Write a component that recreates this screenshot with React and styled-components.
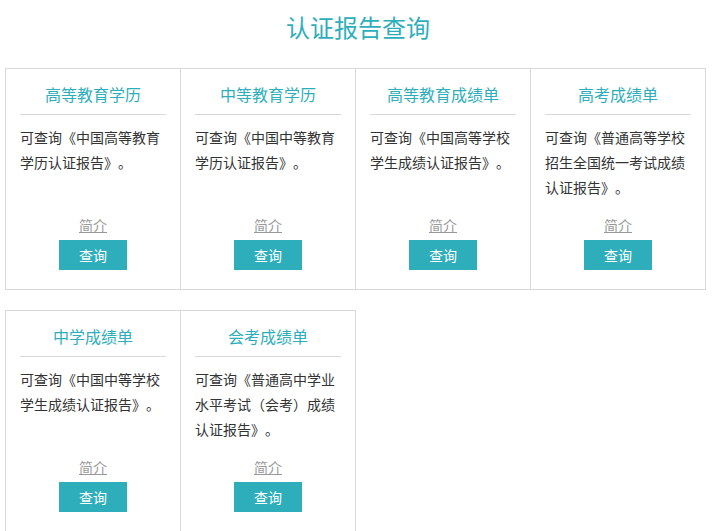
import React from "react";
import styled, { createGlobalStyle } from "styled-components";

const reports = [
  { title: "高等教育学历", desc: "可查询《中国高等教育学历认证报告》。" },
  { title: "中等教育学历", desc: "可查询《中国中等教育学历认证报告》。" },
  { title: "高等教育成绩单", desc: "可查询《中国高等学校学生成绩认证报告》。" },
  { title: "高考成绩单", desc: "可查询《普通高等学校招生全国统一考试成绩认证报告》。" },
  { title: "中学成绩单", desc: "可查询《中国中等学校学生成绩认证报告》。" },
  { title: "会考成绩单", desc: "可查询《普通高中学业水平考试（会考）成绩认证报告》。" },
];

function App() {
  return (
    <>
      <GlobalStyle />
      <Page>
        <Heading>认证报告查询</Heading>
        <CardList>
          {reports.map((r) => (
            <Card key={r.title}>
              <CardTitle>{r.title}</CardTitle>
              <Desc>{r.desc}</Desc>
              <Intro href="#">简介</Intro>
              <QueryButton>查询</QueryButton>
            </Card>
          ))}
        </CardList>
      </Page>
    </>
  );
}

export default App;

const GlobalStyle = createGlobalStyle`
  body {
    margin: 0;
    background: #fff;
    font-family: "Noto Sans CJK SC", "Noto Sans", sans-serif;
    text-spacing-trim: space-all;
  }
`;

const Page = styled.div`
  padding: 0 5px;
`;

const Heading = styled.h1`
  margin: 0;
  height: 68px;
  padding-top: 11px;
  box-sizing: border-box;
  font-size: 24px;
  font-weight: normal;
  line-height: 32px;
  color: #2eaebb;
  text-align: center;
`;

const CardList = styled.div`
  display: flex;
  flex-wrap: wrap;
  row-gap: 20px;
  width: 701px;
`;

const Card = styled.div`
  width: 176px;
  margin-right: -1px;
  box-sizing: border-box;
  border: 1px solid #d9d9d9;
  padding: 13px 14px 19px;
  display: flex;
  flex-direction: column;
  align-items: center;
`;

const CardTitle = styled.h3`
  align-self: stretch;
  margin: 0;
  padding-bottom: 8px;
  border-bottom: 1px solid #d9d9d9;
  font-size: 16px;
  font-weight: normal;
  line-height: 24px;
  color: #2eaebb;
  text-align: center;
`;

const Desc = styled.p`
  align-self: stretch;
  margin: 10px 0 0;
  height: 90px;
  font-size: 14px;
  line-height: 25px;
  color: #333;
`;

const Intro = styled.a`
  font-size: 14px;
  line-height: 20px;
  color: #999;
  text-decoration: underline;
`;

const QueryButton = styled.button`
  margin-top: 5px;
  width: 68px;
  height: 30px;
  border: none;
  padding: 0;
  background: #2eaebb;
  color: #fff;
  font-family: inherit;
  font-size: 14px;
  cursor: pointer;
`;
